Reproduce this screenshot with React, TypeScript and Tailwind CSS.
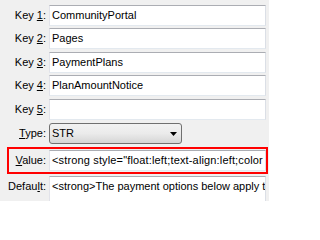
import type { ReactNode } from "react";

const inputCls =
  "flex-1 min-w-0 h-[21px] bg-white border border-t-[#abadb3] border-l-[#e2e3ea] border-r-[#dbdfe6] border-b-[#e3e9ef] px-[2px] leading-[19px] whitespace-nowrap overflow-hidden text-black";

function Label({ children, width = "w-[46px]" }: { children: ReactNode; width?: string }) {
  return <div className={`${width} shrink-0 text-right text-black`}>{children}</div>;
}

function Row({ label, value, mt }: { label: ReactNode; value: string; mt: string }) {
  return (
    <div className={`flex items-center gap-[3px] mr-[3px] ${mt}`}>
      <Label>{label}</Label>
      <div className={inputCls}>{value}</div>
    </div>
  );
}

export default function App() {
  return (
    <div className="w-[269px] h-[201px] overflow-hidden bg-[#f0f0f0] pt-[5px] font-['Liberation_Sans',Arial,sans-serif] text-[11px]">
      <Row label={<>Key <u>1</u>:</>} value="CommunityPortal" mt="" />
      <Row label={<>Key <u>2</u>:</>} value="Pages" mt="mt-[2px]" />
      <Row label={<>Key <u>3</u>:</>} value="PaymentPlans" mt="mt-[3px]" />
      <Row label={<>Key <u>4</u>:</>} value="PlanAmountNotice" mt="mt-[2px]" />
      <Row label={<>Key <u>5</u>:</>} value="" mt="mt-[3px]" />

      <div className="flex items-center gap-[3px] mt-[3px]">
        <Label>
          <u>T</u>ype:
        </Label>
        <div className="relative w-[133px] h-[21px] rounded-[3px] border border-[#707070] bg-gradient-to-b from-[#f2f2f2] via-[#ebebeb] to-[#d5d5d5] px-[2px] leading-[19px] text-black">
          STR
          <svg className="absolute right-[4px] top-[8px]" width="7" height="4" viewBox="0 0 7 4">
            <path d="M0 0H7L3.5 4Z" fill="#000" />
          </svg>
        </div>
      </div>

      <div className="flex items-center gap-[3px] mt-[3px] ml-[7px] mr-[1px] border-2 border-[#ff0000] py-[1px]">
        <Label width="w-[37px]">
          <u>V</u>alue:
        </Label>
        <div className={`${inputCls} tracking-[0.15px]`}>&lt;strong style="float:left;text-align:left;color</div>
      </div>

      <div className="flex items-start gap-[3px] mr-[3px] mt-[2px]">
        <Label>
          <div className="leading-[21px]">
            Defau<u>l</u>t:
          </div>
        </Label>
        <div className={`${inputCls} !h-[28px]`}>&lt;strong&gt;The payment options below apply t</div>
      </div>
    </div>
  );
}
